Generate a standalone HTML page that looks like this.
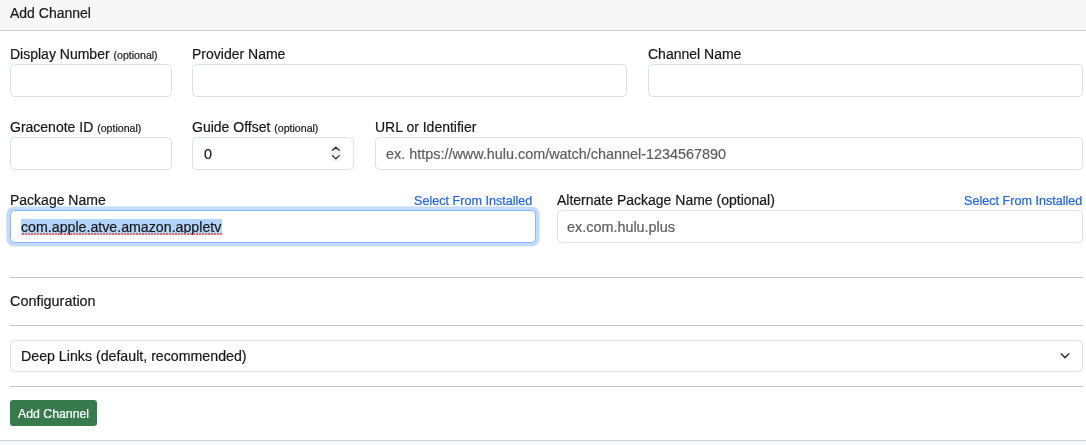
<!DOCTYPE html>
<html><head><meta charset="utf-8">
<style>
*{box-sizing:border-box;margin:0;padding:0}
html,body{width:1086px;height:445px;overflow:hidden;background:#fff}
body{position:relative;font-family:"Liberation Sans",sans-serif;color:#181818;-webkit-text-stroke:0.2px currentColor}
.abs{position:absolute}
.hdr{left:0;top:0;width:1086px;height:30px;background:#f7f7f7}
.line{position:absolute;height:1px}
.t{position:absolute;will-change:transform;white-space:nowrap;line-height:16px;font-size:14px}
.opt{font-size:10.6px}
.box{position:absolute;border:1px solid #dee2e6;border-radius:4.5px;background:#fff}
.ph{color:#5e5e5e}
.lnk{position:absolute;will-change:transform;white-space:nowrap;font-size:12.6px;line-height:14px;color:#1e64ef;text-align:right}
</style></head>
<body>
<div class="abs hdr"></div>
<div class="line" style="left:0;top:30px;width:1086px;background:#cfcfcf"></div>
<div class="t" style="left:10px;top:5px">Add Channel</div>

<!-- row 1 -->
<div class="t" style="left:10px;top:46px">Display Number <span class="opt">(optional)</span></div>
<div class="t" style="left:192px;top:46px">Provider Name</div>
<div class="t" style="left:648px;top:46px">Channel Name</div>
<div class="box" style="left:10px;top:64px;width:162px;height:33px"></div>
<div class="box" style="left:192px;top:64px;width:435px;height:33px"></div>
<div class="box" style="left:648px;top:64px;width:435px;height:33px"></div>

<!-- row 2 -->
<div class="t" style="left:10px;top:119px">Gracenote ID <span class="opt">(optional)</span></div>
<div class="t" style="left:192px;top:119px">Guide Offset <span class="opt">(optional)</span></div>
<div class="t" style="left:375px;top:119px">URL or Identifier</div>
<div class="box" style="left:10px;top:137px;width:162px;height:33px"></div>
<div class="box" style="left:192px;top:137px;width:162px;height:33px"></div>
<div class="box" style="left:375px;top:137px;width:708px;height:33px"></div>
<div class="t" style="left:204px;top:146px;font-size:14.4px">0</div>
<div class="abs" style="left:329.5px;top:145px;width:12px;height:16px;background:#f3f3f3;border-radius:3px"></div>
<div class="abs" style="left:330px;top:152.5px;width:11px;height:1px;background:#e9e9e9"></div>
<svg class="abs" style="left:329px;top:145px" width="13" height="16" viewBox="0 0 13 16"><path d="M3.5 5.3 L6.85 2.2 L10.2 5.3 M3.5 10.6 L6.85 13.9 L10.2 10.6" fill="none" stroke="#262626" stroke-width="1.3" stroke-linecap="round" stroke-linejoin="round"/></svg>
<div class="t ph" style="left:386px;top:146px;font-size:14.4px">ex. https://www.hulu.com/watch/channel-1234567890</div>

<!-- row 3 -->
<div class="t" style="left:10px;top:192px">Package Name</div>
<div class="lnk" style="right:553.5px;top:194px">Select From Installed</div>
<div class="t" style="left:557px;top:192px">Alternate Package Name (optional)</div>
<div class="lnk" style="right:3.5px;top:194px">Select From Installed</div>
<div class="box" style="left:10px;top:210px;width:526px;height:33px;border-color:#86b7fe;box-shadow:0 0 0 3.6px rgba(13,110,253,.25)"></div>
<div class="abs" style="left:21px;top:219px;width:201px;height:16px;background:#b3d4fc"></div>
<div class="t" style="left:21px;top:219px;font-size:14.2px">com.apple.atve.amazon.appletv</div>
<div class="abs" style="left:22px;top:233px;width:200px;height:2px;background:repeating-linear-gradient(90deg,#e06a6a 0 2px,transparent 2px 3px)"></div>
<div class="box" style="left:557px;top:210px;width:526px;height:33px"></div>
<div class="t ph" style="left:567px;top:219px;font-size:14.4px">ex.com.hulu.plus</div>

<div class="line" style="left:10px;top:277px;width:1073px;background:#c4c4c4"></div>
<div class="t" style="left:10px;top:293px;font-size:14.4px">Configuration</div>
<div class="line" style="left:10px;top:325px;width:1073px;background:#c4c4c4"></div>

<div class="box" style="left:10px;top:340px;width:1073px;height:32px"></div>
<div class="t" style="left:21.4px;top:348px;font-size:14.2px">Deep Links (default, recommended)</div>
<svg class="abs" style="left:1058px;top:350px" width="14" height="12" viewBox="0 0 14 12"><path d="M3.1 3.7 L7 7.6 L10.9 3.7" fill="none" stroke="#343a40" stroke-width="1.5" stroke-linecap="round" stroke-linejoin="round"/></svg>

<div class="line" style="left:10px;top:386px;width:1073px;background:#c4c4c4"></div>

<div class="abs" style="left:10px;top:400px;width:87px;height:26px;background:#367a4e;border-radius:3px"></div>
<div class="t" style="left:17.9px;top:406px;font-size:12.3px;color:#fff">Add Channel</div>

<div class="line" style="left:0;top:440px;width:1086px;background:#d2d2d2"></div>
<div class="abs" style="left:0;top:441px;width:1086px;height:4px;background:#f6f7f9"></div>
</body></html>
